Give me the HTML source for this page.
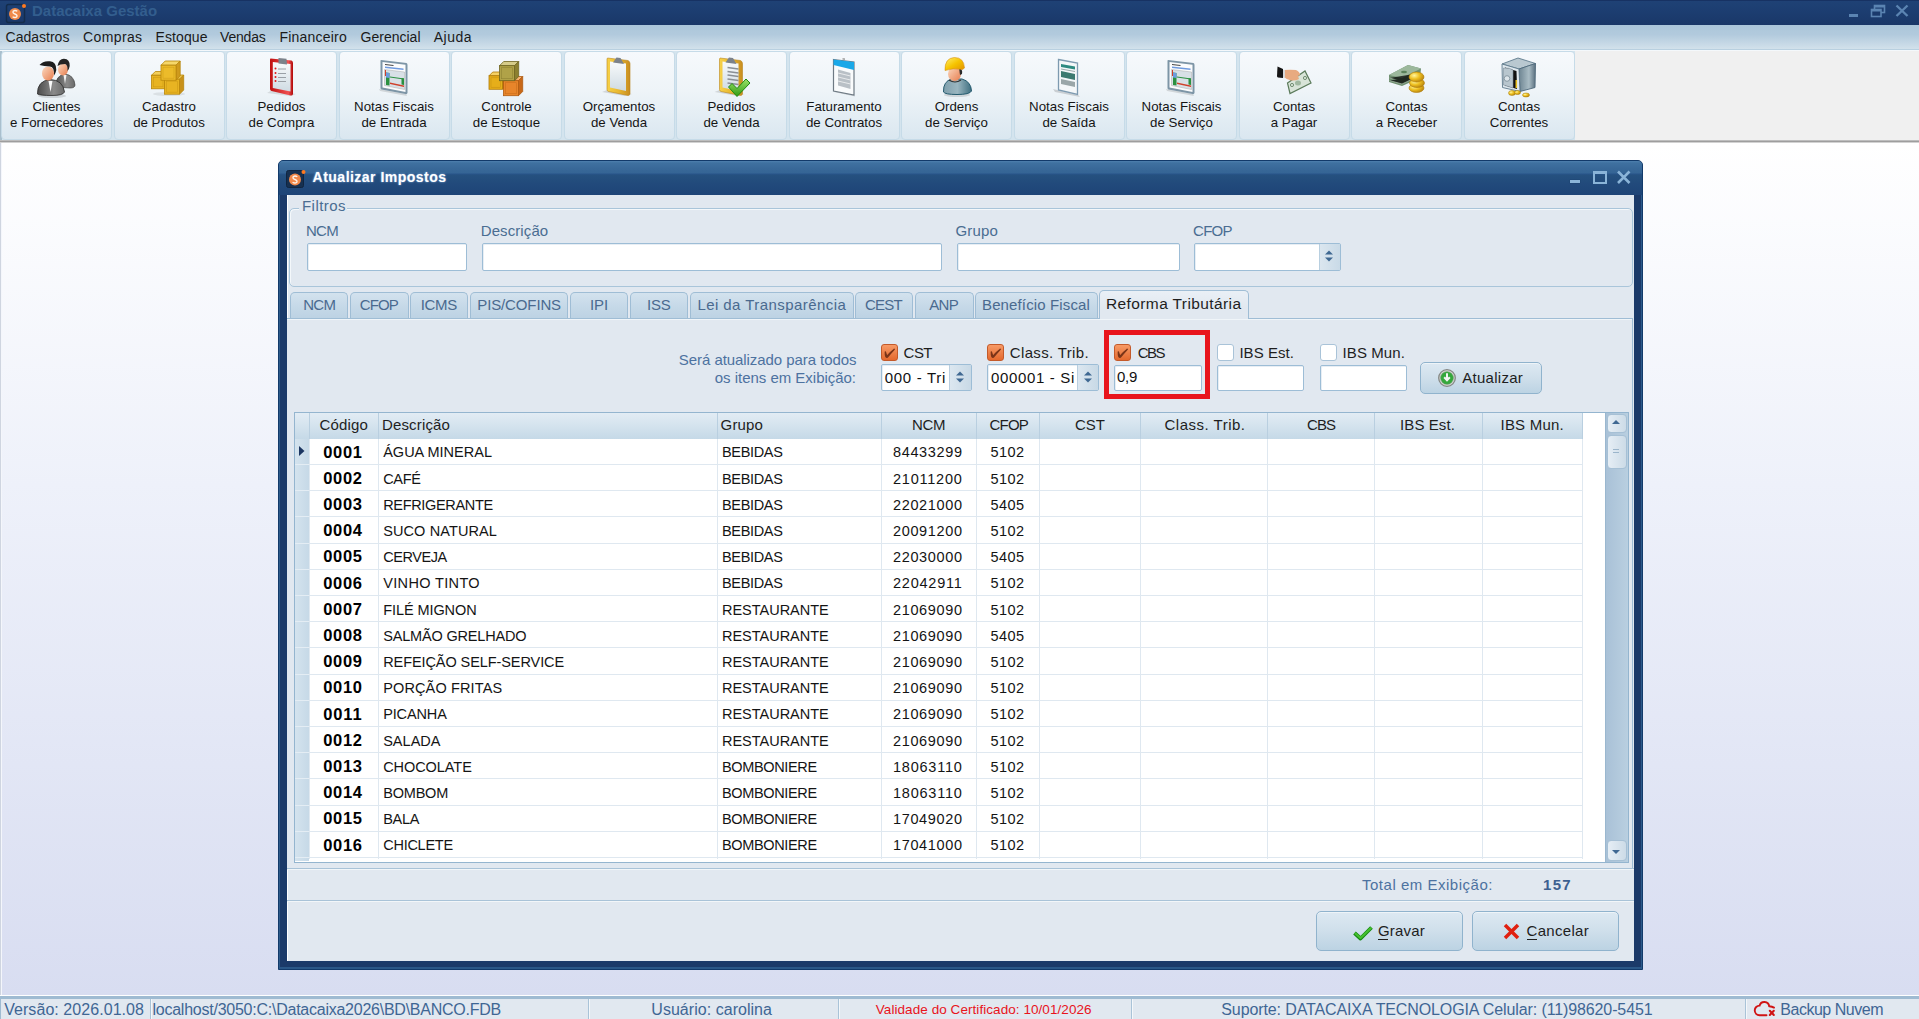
<!DOCTYPE html>
<html><head><meta charset="utf-8"><title>Datacaixa Gestão</title>
<style>
html,body{margin:0;padding:0;}
body{width:1919px;height:1019px;overflow:hidden;position:relative;font-family:'Liberation Sans', sans-serif;background:#fff;}
div,span{box-sizing:border-box;}
</style></head><body>
<div style="position:absolute;left:0px;top:0px;width:1919px;height:25px;background:linear-gradient(#1f4276 0%,#1c3d70 50%,#1a3768 100%);"></div><div style="position:absolute;left:0px;top:0px;width:1919px;height:1px;background:#173263;"></div><svg style="position:absolute;left:5px;top:2px" width="22" height="22" viewBox="0 0 22 22"><rect x="1.5" y="2.5" width="18" height="18" rx="2" fill="none" stroke="#142c4c" stroke-width="1.5"/><circle cx="10" cy="12" r="6" fill="#f08a4a"/><path d="M12.3 9.3 Q10 7.6 8.2 9.2 Q7.4 11 10 12 Q12.6 13 11.8 14.8 Q10 16.4 7.6 14.7" fill="none" stroke="#fff3e8" stroke-width="1.4"/><circle cx="19" cy="4" r="2" fill="#ff7a20"/></svg><div style="position:absolute;left:1849px;top:14px;width:9px;height:3px;background:#5b84b2;"></div><svg style="position:absolute;left:1870px;top:4px" width="16" height="14" viewBox="0 0 16 14"><rect x="4.5" y="1.5" width="10" height="7" fill="none" stroke="#5b84b2" stroke-width="1.6"/><rect x="1" y="5" width="10" height="7.5" fill="#1b3a6c"/><rect x="1.5" y="5.5" width="9.5" height="7" fill="none" stroke="#5b84b2" stroke-width="1.6"/><rect x="1.5" y="5.5" width="9.5" height="2" fill="#5b84b2"/><rect x="4.5" y="1.5" width="10" height="2" fill="#5b84b2"/></svg><svg style="position:absolute;left:1894px;top:4px" width="16" height="14" viewBox="0 0 16 14"><path d="M2.5 1.5 L13.5 12 M13.5 1.5 L2.5 12" stroke="#5b84b2" stroke-width="2.4"/></svg><div style="position:absolute;left:0px;top:25px;width:1919px;height:24px;background:linear-gradient(#abc6da 0%,#b2cadd 40%,#d2e1eb 100%);"></div><div style="position:absolute;left:0px;top:49px;width:1919px;height:1px;background:#b9d0e0;"></div><div style="position:absolute;left:0px;top:50px;width:1919px;height:1px;background:#f4f8fb;"></div><div style="position:absolute;left:0px;top:51px;width:1919px;height:89px;background:#f0f0f0;"></div><div style="position:absolute;left:0px;top:51px;width:1575px;height:89px;background:#d4e4ee;"></div><div style="position:absolute;left:0px;top:51px;width:2px;height:89px;background:#a9bfcd;"></div><div style="position:absolute;left:1.25px;top:51px;width:111px;height:89px;background:linear-gradient(#f6f9fc 0%,#eef4f8 45%,#dae7f0 100%);border:1px solid #c6dbe8;border-radius:4px;"></div><div style="position:absolute;left:113.75px;top:51px;width:111px;height:89px;background:linear-gradient(#f6f9fc 0%,#eef4f8 45%,#dae7f0 100%);border:1px solid #c6dbe8;border-radius:4px;"></div><div style="position:absolute;left:226.25px;top:51px;width:111px;height:89px;background:linear-gradient(#f6f9fc 0%,#eef4f8 45%,#dae7f0 100%);border:1px solid #c6dbe8;border-radius:4px;"></div><div style="position:absolute;left:338.75px;top:51px;width:111px;height:89px;background:linear-gradient(#f6f9fc 0%,#eef4f8 45%,#dae7f0 100%);border:1px solid #c6dbe8;border-radius:4px;"></div><div style="position:absolute;left:451.25px;top:51px;width:111px;height:89px;background:linear-gradient(#f6f9fc 0%,#eef4f8 45%,#dae7f0 100%);border:1px solid #c6dbe8;border-radius:4px;"></div><div style="position:absolute;left:563.75px;top:51px;width:111px;height:89px;background:linear-gradient(#f6f9fc 0%,#eef4f8 45%,#dae7f0 100%);border:1px solid #c6dbe8;border-radius:4px;"></div><div style="position:absolute;left:676.25px;top:51px;width:111px;height:89px;background:linear-gradient(#f6f9fc 0%,#eef4f8 45%,#dae7f0 100%);border:1px solid #c6dbe8;border-radius:4px;"></div><div style="position:absolute;left:788.75px;top:51px;width:111px;height:89px;background:linear-gradient(#f6f9fc 0%,#eef4f8 45%,#dae7f0 100%);border:1px solid #c6dbe8;border-radius:4px;"></div><div style="position:absolute;left:901.25px;top:51px;width:111px;height:89px;background:linear-gradient(#f6f9fc 0%,#eef4f8 45%,#dae7f0 100%);border:1px solid #c6dbe8;border-radius:4px;"></div><div style="position:absolute;left:1013.75px;top:51px;width:111px;height:89px;background:linear-gradient(#f6f9fc 0%,#eef4f8 45%,#dae7f0 100%);border:1px solid #c6dbe8;border-radius:4px;"></div><div style="position:absolute;left:1126.25px;top:51px;width:111px;height:89px;background:linear-gradient(#f6f9fc 0%,#eef4f8 45%,#dae7f0 100%);border:1px solid #c6dbe8;border-radius:4px;"></div><div style="position:absolute;left:1238.75px;top:51px;width:111px;height:89px;background:linear-gradient(#f6f9fc 0%,#eef4f8 45%,#dae7f0 100%);border:1px solid #c6dbe8;border-radius:4px;"></div><div style="position:absolute;left:1351.25px;top:51px;width:111px;height:89px;background:linear-gradient(#f6f9fc 0%,#eef4f8 45%,#dae7f0 100%);border:1px solid #c6dbe8;border-radius:4px;"></div><div style="position:absolute;left:1463.75px;top:51px;width:111px;height:89px;background:linear-gradient(#f6f9fc 0%,#eef4f8 45%,#dae7f0 100%);border:1px solid #c6dbe8;border-radius:4px;"></div><svg width="0" height="0" style="position:absolute"><defs><linearGradient id="gFace" x1="0" y1="0" x2="1" y2="1"><stop offset="0" stop-color="#fbd9c0"/><stop offset="1" stop-color="#e77d4e"/></linearGradient><linearGradient id="gSuit" x1="0" y1="0" x2="1" y2="0"><stop offset="0" stop-color="#4c4c4c"/><stop offset=".6" stop-color="#8a8a8a"/><stop offset="1" stop-color="#6a6a6a"/></linearGradient><linearGradient id="gGold" x1="0" y1="0" x2="1" y2="1"><stop offset="0" stop-color="#ffe27a"/><stop offset=".5" stop-color="#f0b820"/><stop offset="1" stop-color="#c88a10"/></linearGradient><linearGradient id="gRed" x1="0" y1="0" x2="1" y2="0"><stop offset="0" stop-color="#c01010"/><stop offset=".8" stop-color="#f05050"/><stop offset="1" stop-color="#b00808"/></linearGradient><linearGradient id="gPaper" x1="0" y1="0" x2="0" y2="1"><stop offset="0" stop-color="#f8fafb"/><stop offset="1" stop-color="#cfdbe3"/></linearGradient><linearGradient id="gYel" x1="0" y1="0" x2="1" y2="0"><stop offset="0" stop-color="#f7d24a"/><stop offset=".5" stop-color="#e8b830"/><stop offset="1" stop-color="#c88d20"/></linearGradient><linearGradient id="gHelm" x1="0" y1="0" x2="1" y2="1"><stop offset="0" stop-color="#fff070"/><stop offset=".5" stop-color="#f6c400"/><stop offset="1" stop-color="#e09000"/></linearGradient><linearGradient id="gTeal" x1="0" y1="0" x2="1" y2="0"><stop offset="0" stop-color="#7f9fac"/><stop offset=".5" stop-color="#9ab6c0"/><stop offset="1" stop-color="#3f6f80"/></linearGradient><linearGradient id="gSafe" x1="0" y1="0" x2="1" y2="0"><stop offset="0" stop-color="#6e8592"/><stop offset=".6" stop-color="#a9bcc4"/><stop offset="1" stop-color="#5a7080"/></linearGradient><linearGradient id="gGreen" x1="0" y1="0" x2="0" y2="1"><stop offset="0" stop-color="#9be36a"/><stop offset="1" stop-color="#2f9a10"/></linearGradient><radialGradient id="gCoin" cx=".35" cy=".35" r=".7"><stop offset="0" stop-color="#fff6a0"/><stop offset=".5" stop-color="#eec020"/><stop offset="1" stop-color="#b88410"/></radialGradient></defs></svg><svg style="position:absolute;left:30px;top:54px;overflow:visible" width="50" height="44" viewBox="0 0 50 44"><defs></defs><ellipse cx="22" cy="42" rx="14" ry="2" fill="#000" opacity=".12"/><path d="M25 33 Q26 21 35 20 Q44 21 45 31 Q45 34 40 34Z" fill="url(#gSuit)" stroke="#333" stroke-width=".6"/><path d="M33.5 21 L35 30 L36.5 21Z" fill="#f2f2f2"/><ellipse cx="33" cy="15.5" rx="5" ry="6" fill="url(#gFace)"/><path d="M27.5 12 Q29 4.5 34 4.7 Q40 5 39.7 12 Q39 16 37.5 17 Q38 11 35 10 Q30 10 27.5 12Z" fill="#242424"/><path d="M7.5 40 Q7 27 20 25.5 Q33 26 34.5 38 Q33 41.5 22 41.5 Q10 41.5 7.5 40Z" fill="url(#gSuit)" stroke="#2a2a2a" stroke-width=".8"/><path d="M18.5 27 L20.5 38 L22.5 27Z" fill="#fafafa"/><ellipse cx="18" cy="19.5" rx="6" ry="7" fill="url(#gFace)"/><path d="M9.5 11 Q13 6.5 20 7.3 Q26.5 8 26.3 16 Q25.5 20 24 21.5 Q24.5 13 20 12.5 Q14 12 9.5 11Z" fill="#1e1e1e"/></svg><svg style="position:absolute;left:145px;top:54px;overflow:visible" width="50" height="44" viewBox="0 0 50 44"><defs></defs><ellipse cx="24" cy="40" rx="16" ry="2" fill="#000" opacity=".08"/><path d="M6.5 21.28 L10.280000000000001 17.5 L23.78 17.5 L20.0 21.28Z" fill="#f3cf5a" stroke="#b8860b" stroke-width=".8"/><path d="M20.0 21.28 L23.78 17.5 L23.78 31.0 L20.0 34.78Z" fill="#c8911a" stroke="#b8860b" stroke-width=".8"/><rect x="6.5" y="21.28" width="13.5" height="13.5" fill="#e8b422" stroke="#b8860b" stroke-width=".8"/><rect x="8.5" y="23.28" width="9.5" height="9.5" fill="none" stroke="#b8860b" stroke-width=".6" opacity=".5"/><path d="M19.5 25.2 L23.7 21 L38.7 21 L34.5 25.2Z" fill="#f3cf5a" stroke="#b8860b" stroke-width=".8"/><path d="M34.5 25.2 L38.7 21 L38.7 36 L34.5 40.2Z" fill="#c8911a" stroke="#b8860b" stroke-width=".8"/><rect x="19.5" y="25.2" width="15" height="15" fill="#e8b422" stroke="#b8860b" stroke-width=".8"/><rect x="21.5" y="27.2" width="11" height="11" fill="none" stroke="#b8860b" stroke-width=".6" opacity=".5"/><path d="M16 11.2 L20.2 7 L35.2 7 L31 11.2Z" fill="#f6d76a" stroke="#b8860b" stroke-width=".8"/><path d="M31 11.2 L35.2 7 L35.2 22 L31 26.2Z" fill="#cf9a1e" stroke="#b8860b" stroke-width=".8"/><rect x="16" y="11.2" width="15" height="15" fill="#ecbb2a" stroke="#b8860b" stroke-width=".8"/><rect x="18" y="13.2" width="11" height="11" fill="none" stroke="#b8860b" stroke-width=".6" opacity=".5"/></svg><svg style="position:absolute;left:260px;top:54px;overflow:visible" width="50" height="44" viewBox="0 0 50 44"><defs></defs><path d="M7 39 L30 42 L36 40 L12 36Z" fill="#000" opacity=".1"/><path d="M10.5 4.5 L31.5 6.5 Q33 7 33 9 L33 40 Q32.5 42 30.5 41.5 L11.5 37 Q10 36.5 10 35 L10 6 Q10 4.5 10.5 4.5Z" fill="url(#gRed)"/><path d="M12.8 8 L30.5 10 L30.5 37.5 L12.8 34Z" fill="url(#gPaper)"/><path d="M18.5 4 L26.5 4.8 L27 10.5 L18.5 9.5Z" fill="#7c828a"/><g fill="#e01818"><circle cx="15.5" cy="14.5" r="1"/><circle cx="15.5" cy="19" r="1"/><circle cx="15.5" cy="23" r="1"/><circle cx="15.5" cy="27" r="1"/></g><g stroke="#9aa0a6" stroke-width="1"><path d="M18 15 H26"/><path d="M18 19.5 H26"/><path d="M18 23.5 H26"/><path d="M18 27.5 H26"/></g></svg><svg style="position:absolute;left:370px;top:54px;overflow:visible" width="50" height="44" viewBox="0 0 50 44"><defs></defs><path d="M9 35 L36 40 L37 42 L10 37Z" fill="#000" opacity=".12"/><path d="M11 6 L36.5 9 Q37.5 9.5 37.5 11 L37.5 39 Q37 40.5 35.5 40 L11.5 35.5 Q10.5 35 10.5 34 L10.5 6.5Z" fill="#7d95a6"/><path d="M12.5 8 L35.5 10.8 L35.5 38 L12.5 33.5Z" fill="#fbfcfd"/><path d="M15 10 L23.5 11 L23.5 12 L15 11Z" fill="#444"/><path d="M15 12.5 L33.5 14.5 L33.5 16 L15 14Z" fill="#6f9ade"/><path d="M14.5 15.5 L34.5 18 L34.5 35.5 L14.5 31.5Z" fill="#d8e0e6" stroke="#999" stroke-width=".4"/><path d="M16 18.5 L19.5 19 L19.5 31.5 L16 31Z" fill="#2a9040"/><path d="M16 18.5 L19.5 19 L19.5 24 L16 23.5Z" fill="#6c9be0"/><path d="M31.5 24 L34 24.5 L34 31 L31.5 30.5Z" fill="#2a9040"/><path d="M20 22.5 L34 24.5 L34 25.5 L20 23.5Z" fill="#2a9040"/><path d="M20 28.5 L34 31.5 L34 33 L20 30Z" fill="#d0402a"/><path d="M15 16 L16 16 L16 22 L15 22Z" fill="#d0402a"/></svg><svg style="position:absolute;left:480px;top:54px;overflow:visible" width="50" height="44" viewBox="0 0 50 44"><defs></defs><path d="M9 21.78 L12.780000000000001 18 L26.28 18 L22.5 21.78Z" fill="#f4d066" stroke="#b07a08" stroke-width=".8"/><path d="M22.5 21.78 L26.28 18 L26.28 31.5 L22.5 35.28Z" fill="#c89010" stroke="#b07a08" stroke-width=".8"/><rect x="9" y="21.78" width="13.5" height="13.5" fill="#e6ae1a" stroke="#b07a08" stroke-width=".8"/><rect x="11" y="23.78" width="9.5" height="9.5" fill="none" stroke="#b07a08" stroke-width=".6" opacity=".5"/><path d="M23.5 26.7 L27.7 22.5 L42.7 22.5 L38.5 26.7Z" fill="#f6b070" stroke="#b05a10" stroke-width=".8"/><path d="M38.5 26.7 L42.7 22.5 L42.7 37.5 L38.5 41.7Z" fill="#c86818" stroke="#b05a10" stroke-width=".8"/><rect x="23.5" y="26.7" width="15" height="15" fill="#e8852a" stroke="#b05a10" stroke-width=".8"/><rect x="25.5" y="28.7" width="11" height="11" fill="none" stroke="#b05a10" stroke-width=".6" opacity=".5"/><path d="M19.5 11.7 L23.7 7.5 L38.7 7.5 L34.5 11.7Z" fill="#d6cc8a" stroke="#6e6420" stroke-width=".8"/><path d="M34.5 11.7 L38.7 7.5 L38.7 22.5 L34.5 26.7Z" fill="#8c8030" stroke="#6e6420" stroke-width=".8"/><rect x="19.5" y="11.7" width="15" height="15" fill="#b0a248" stroke="#6e6420" stroke-width=".8"/><rect x="21.5" y="13.7" width="11" height="11" fill="none" stroke="#6e6420" stroke-width=".6" opacity=".5"/></svg><svg style="position:absolute;left:595px;top:54px;overflow:visible" width="50" height="44" viewBox="0 0 50 44"><defs></defs><path d="M7 38 L30 42 L37 40 L12 36Z" fill="#000" opacity=".12"/><path d="M12.5 4 L33 6.5 Q35 7.5 35 9.5 L35 40 Q34.5 41.5 33 41.5 L13.5 37.5 Q12 37 12 35.5 L12 5Z" fill="url(#gYel)" stroke="#b8841c" stroke-width=".6"/><path d="M15 7.5 L31 9.5 L31 37 L15 33.5Z" fill="url(#gPaper)"/><path d="M21.5 3.5 L25.5 4 L29 10 L18 8.5Z" fill="#7c828a"/></svg><svg style="position:absolute;left:705px;top:54px;overflow:visible" width="55" height="44" viewBox="0 0 55 44"><defs></defs><g transform="translate(2.5,0)"><path d="M7 38 L30 42 L37 40 L12 36Z" fill="#000" opacity=".12"/><path d="M12.5 4 L33 6.5 Q35 7.5 35 9.5 L35 40 Q34.5 41.5 33 41.5 L13.5 37.5 Q12 37 12 35.5 L12 5Z" fill="url(#gYel)" stroke="#b8841c" stroke-width=".6"/><path d="M15 7.5 L31 9.5 L31 37 L15 33.5Z" fill="url(#gPaper)"/><path d="M21.5 3.5 L25.5 4 L29 10 L18 8.5Z" fill="#7c828a"/><g stroke="#8a8f95" stroke-width="1.4"><path d="M20 13.5 L31 15"/><path d="M20 17.5 L31 19"/><path d="M20 21 L31 22.5"/><path d="M20 25 L31 26.5"/><path d="M20 29 L31 30.5"/></g></g><path d="M23.5 33 L27 29.5 L32 34.5 L41 25 L45 29 L32 42.5Z" fill="url(#gGreen)" stroke="#1f8a10" stroke-width="1"/></svg><svg style="position:absolute;left:820px;top:54px;overflow:visible" width="50" height="44" viewBox="0 0 50 44"><defs></defs><path d="M14 36 L34 41 L35 42.5 L14 38Z" fill="#000" opacity=".15"/><path d="M13.5 5.5 L34 8 L34 41 L13.5 37Z" fill="#f9fbfc" stroke="#6e7a84" stroke-width="1.2"/><path d="M13.5 5.5 L34 8 L34 16 L13.5 11Z" fill="#1aa8e8"/><path d="M22.5 4 L25 4.3 L25 6 L22.5 5.7Z" fill="#aaa"/><g fill="#b9c0c6"><path d="M18 15.5 L30.5 19 L30.5 35 L18 31.5Z"/></g><g stroke="#fafafa" stroke-width=".9" opacity=".8"><path d="M18 19 L30.5 22"/><path d="M18 23 L30.5 26"/><path d="M18 27 L30.5 30"/></g></svg><svg style="position:absolute;left:935px;top:54px;overflow:visible" width="50" height="44" viewBox="0 0 50 44"><defs></defs><ellipse cx="22" cy="41" rx="13" ry="2" fill="#000" opacity=".12"/><path d="M8.5 38 Q8 27 17 25 L27 25 Q36 27.5 36.5 37 Q35 40.5 22 40.5 Q10 40.5 8.5 38Z" fill="url(#gTeal)" stroke="#235a6e" stroke-width="1"/><path d="M14 26 Q20 30 26 26" fill="none" stroke="#333" stroke-width="1.2"/><ellipse cx="19.5" cy="20" rx="6.5" ry="7" fill="url(#gFace)"/><path d="M24 14 Q28 15 27 20 L25 21Z" fill="#2a2a2a"/><path d="M10 16.5 Q9.5 4 19.5 3.5 Q29 3.5 29.5 14 L27.5 15.5 Q18 13.5 10 16.5Z" fill="url(#gHelm)" stroke="#d89010" stroke-width=".6"/></svg><svg style="position:absolute;left:1045px;top:54px;overflow:visible" width="50" height="44" viewBox="0 0 50 44"><defs></defs><path d="M8 35 L33 41 L35 43 L10 38Z" fill="#000" opacity=".15"/><path d="M13.5 5.5 L32.5 9 L32.5 40.5 L13.5 36Z" fill="#f4f7f9" stroke="#7d9ab0" stroke-width="1.3"/><path d="M16 10 L30 12.5 L30 15.5 L16 13Z" fill="#2d8a80"/><path d="M16 14.5 L30 17 L30 18 L16 15.5Z" fill="#9aa"/><path d="M16 17 L30 20 L30 26 L16 23Z" fill="#3c7a70"/><path d="M16 25 L30 28 L30 33 L16 30Z" fill="#9aa6a8"/></svg><svg style="position:absolute;left:1157px;top:54px;overflow:visible" width="50" height="44" viewBox="0 0 50 44"><defs></defs><path d="M9 35 L36 40 L37 42 L10 37Z" fill="#000" opacity=".12"/><path d="M11 6 L36.5 9 Q37.5 9.5 37.5 11 L37.5 39 Q37 40.5 35.5 40 L11.5 35.5 Q10.5 35 10.5 34 L10.5 6.5Z" fill="#7d95a6"/><path d="M12.5 8 L35.5 10.8 L35.5 38 L12.5 33.5Z" fill="#fbfcfd"/><path d="M15 10 L23.5 11 L23.5 12 L15 11Z" fill="#444"/><path d="M15 12.5 L33.5 14.5 L33.5 16 L15 14Z" fill="#6f9ade"/><path d="M14.5 15.5 L34.5 18 L34.5 35.5 L14.5 31.5Z" fill="#d8e0e6" stroke="#999" stroke-width=".4"/><path d="M16 18.5 L19.5 19 L19.5 31.5 L16 31Z" fill="#2a9040"/><path d="M16 18.5 L19.5 19 L19.5 24 L16 23.5Z" fill="#6c9be0"/><path d="M31.5 24 L34 24.5 L34 31 L31.5 30.5Z" fill="#2a9040"/><path d="M20 22.5 L34 24.5 L34 25.5 L20 23.5Z" fill="#2a9040"/><path d="M20 28.5 L34 31.5 L34 33 L20 30Z" fill="#d0402a"/><path d="M15 16 L16 16 L16 22 L15 22Z" fill="#d0402a"/></svg><svg style="position:absolute;left:1270px;top:54px;overflow:visible" width="50" height="44" viewBox="0 0 50 44"><defs></defs><path d="M17.5 29 L35 17 L41 29 L20 39.5Z" fill="#d8e4d8" stroke="#5a7a5a" stroke-width="1.2"/><circle cx="22" cy="31" r="1.6" fill="none" stroke="#5a7a5a" stroke-width=".8"/><circle cx="35" cy="24" r="1.6" fill="none" stroke="#5a7a5a" stroke-width=".8"/><ellipse cx="28" cy="29" rx="3" ry="2.5" fill="#7a9a7a" opacity=".6"/><path d="M14 16 Q20 15.5 26 16 Q30 18 30 21 L28 22 L29 25 Q26 27 21 26.5 Q16 25 14 23Z" fill="#e8aa80"/><path d="M13 16 L15 16 L15 23.5 L13 23.5Z" fill="#d8d8d8"/><path d="M7.5 12.5 L13 15 L13 24 L8 23.5 Q7 23 7 22Z" fill="#151515"/></svg><svg style="position:absolute;left:1380px;top:54px;overflow:visible" width="50" height="44" viewBox="0 0 50 44"><defs></defs><path d="M9 21 L28 11 L41 14.5 L40 24 L22 32 L9 28Z" fill="#6f8f70"/><path d="M9 21 L28 11 L41 14.5 L22 24Z" fill="#9cb89c"/><g stroke="#c8d8c8" stroke-width=".7" opacity=".7"><path d="M9.5 24 L22 27.5 L40 19"/><path d="M9.5 26.5 L22 30 L40 21.5"/></g><ellipse cx="24" cy="18" rx="3" ry="1.2" fill="#3e6a3e" opacity=".7"/><g stroke="#b07c08" stroke-width=".6"><ellipse cx="36.5" cy="34" rx="7.5" ry="4.5" fill="url(#gCoin)"/><ellipse cx="37" cy="29" rx="7.5" ry="4.5" fill="url(#gCoin)"/><ellipse cx="36.5" cy="23" rx="7.5" ry="5" fill="url(#gCoin)"/></g></svg><svg style="position:absolute;left:1495px;top:54px;overflow:visible" width="50" height="46" viewBox="0 0 50 46"><defs></defs><path d="M7 10 L23 4 L40.5 9.5 L24 15Z" fill="#b9c8d0" stroke="#5f7a8c" stroke-width=".9"/><path d="M24 15 L40.5 9.5 L40 33.5 L25 37.5Z" fill="url(#gSafe)" stroke="#4f6a7c" stroke-width=".9"/><path d="M7 10 L24 15 L25 37.5 L7.5 33.5Z" fill="#dfe8ee" stroke="#5f7a8c" stroke-width=".9"/><path d="M10 13.5 L21.5 17 L22 35 L10 31.5Z" fill="#111"/><path d="M8.5 14 Q15 13.5 18 16 L18 34 L8.5 31Z" fill="#b8c6ce" stroke="#7a8c98" stroke-width=".6"/><circle cx="12" cy="24.5" r="2.8" fill="#dde5ea" stroke="#788a96" stroke-width=".8"/><rect x="20.5" y="26" width="1.6" height="8" fill="#e8c020"/><g stroke="#a88008" stroke-width=".5"><ellipse cx="17" cy="39" rx="3.5" ry="2.5" fill="url(#gCoin)"/><ellipse cx="22.5" cy="38.5" rx="3" ry="2" fill="url(#gCoin)"/><ellipse cx="31" cy="41" rx="3.5" ry="2" fill="url(#gCoin)"/></g></svg><div style="position:absolute;left:0px;top:140px;width:1919px;height:1px;background:#bdbdbd;"></div><div style="position:absolute;left:0px;top:141px;width:1919px;height:1px;background:#9e9e9e;"></div><div style="position:absolute;left:0px;top:142px;width:1919px;height:1px;background:#d2d2d2;"></div><div style="position:absolute;left:0px;top:143px;width:1919px;height:853px;background:linear-gradient(#ffffff 0%,#eef1fa 40%,#d8ddf1 100%);"></div><div style="position:absolute;left:0px;top:143px;width:1px;height:853px;background:#cfd5e0;"></div><div style="position:absolute;left:1px;top:143px;width:1px;height:853px;background:#f4f6fb;"></div><div style="position:absolute;left:278px;top:160px;width:1365px;height:810px;background:#1b3a69;border-radius:5px 5px 0 0;border:1px solid #123a6a;box-shadow:inset 1px 0 0 #2c5a8a,inset -1px 0 0 #2c5a8a,inset 0 -2px 0 #2a5787;"></div><div style="position:absolute;left:279px;top:161px;width:1363px;height:34px;background:linear-gradient(#4e80ae 0px,#3f71a0 2px,#386898 8px,#356595 12px,#28548a 13px,#25517f 14px,#21497b 24px,#1e4477 34px);border-radius:4px 4px 0 0;"></div><svg style="position:absolute;left:285px;top:168px" width="22" height="22" viewBox="0 0 22 22"><rect x="1.5" y="2.5" width="17" height="17" rx="2" fill="#163050" stroke="#102540" stroke-width="1"/><circle cx="10" cy="11.5" r="6" fill="#f0884a"/><path d="M12.3 8.8 Q10 7.1 8.2 8.7 Q7.4 10.5 10 11.5 Q12.6 12.5 11.8 14.3 Q10 15.9 7.6 14.2" fill="none" stroke="#fff3e8" stroke-width="1.4"/><circle cx="18.5" cy="4" r="2" fill="#ff7a20"/></svg><div style="position:absolute;left:1570px;top:180px;width:9.5px;height:3px;background:#8ab4d8;box-shadow:0 0 1px #0e2a50;"></div><div style="position:absolute;left:1593px;top:171px;width:14px;height:12.5px;border:2px solid #8ab4d8;border-top-width:3px;"></div><svg style="position:absolute;left:1616px;top:170px" width="16" height="15" viewBox="0 0 16 15"><path d="M2 1.5 L13.5 13 M13.5 1.5 L2 13" stroke="#8ab4d8" stroke-width="2.6"/></svg><div style="position:absolute;left:287px;top:195px;width:1347px;height:766px;background:#e1e8f0;box-shadow:inset 1px 0 0 #ffffff;"></div><div style="position:absolute;left:288.5px;top:208px;width:1344px;height:79px;border:1px solid #a9c5da;border-radius:5px;box-shadow:inset 1px 1px 0 #f4f8fb;"></div><div style="position:absolute;left:299px;top:199px;width:48px;height:14px;background:#e1e8f0;"></div><div style="position:absolute;left:307px;top:242.5px;width:160px;height:28px;background:#fff;border:1px solid #9dbdd6;border-radius:2px;box-shadow:inset 1px 1px 0 #e8eef4;"></div><div style="position:absolute;left:482px;top:242.5px;width:460px;height:28px;background:#fff;border:1px solid #9dbdd6;border-radius:2px;box-shadow:inset 1px 1px 0 #e8eef4;"></div><div style="position:absolute;left:956.5px;top:242.5px;width:223px;height:28px;background:#fff;border:1px solid #9dbdd6;border-radius:2px;box-shadow:inset 1px 1px 0 #e8eef4;"></div><div style="position:absolute;left:1194px;top:242.5px;width:147px;height:28px;background:#fff;border:1px solid #9dbdd6;border-radius:2px;box-shadow:inset 1px 1px 0 #e8eef4;"></div><div style="position:absolute;left:1318.5px;top:243.5px;width:21.5px;height:26px;background:linear-gradient(90deg,#dbe6ef,#c9dae7);border-left:1px solid #b8cfe0;"></div><svg style="position:absolute;left:1322px;top:247px" width="14" height="18" viewBox="0 0 14 18"><path d="M3 7.5 L7 3.5 L11 7.5Z M3 10.5 L7 14.5 L11 10.5Z" fill="#3f6892"/></svg><div style="position:absolute;left:289.6px;top:291.5px;width:58.799999999999955px;height:27px;background:linear-gradient(#d3e2ee 0%,#c6d9e8 50%,#bcd2e3 100%);border:1px solid #9fbdd5;border-bottom:none;border-radius:5px 5px 0 0;"></div><div style="position:absolute;left:350px;top:291.5px;width:58.80000000000001px;height:27px;background:linear-gradient(#d3e2ee 0%,#c6d9e8 50%,#bcd2e3 100%);border:1px solid #9fbdd5;border-bottom:none;border-radius:5px 5px 0 0;"></div><div style="position:absolute;left:410.2px;top:291.5px;width:58.19999999999999px;height:27px;background:linear-gradient(#d3e2ee 0%,#c6d9e8 50%,#bcd2e3 100%);border:1px solid #9fbdd5;border-bottom:none;border-radius:5px 5px 0 0;"></div><div style="position:absolute;left:469.5px;top:291.5px;width:98.79999999999995px;height:27px;background:linear-gradient(#d3e2ee 0%,#c6d9e8 50%,#bcd2e3 100%);border:1px solid #9fbdd5;border-bottom:none;border-radius:5px 5px 0 0;"></div><div style="position:absolute;left:569.5px;top:291.5px;width:58.799999999999955px;height:27px;background:linear-gradient(#d3e2ee 0%,#c6d9e8 50%,#bcd2e3 100%);border:1px solid #9fbdd5;border-bottom:none;border-radius:5px 5px 0 0;"></div><div style="position:absolute;left:629.5px;top:291.5px;width:58.799999999999955px;height:27px;background:linear-gradient(#d3e2ee 0%,#c6d9e8 50%,#bcd2e3 100%);border:1px solid #9fbdd5;border-bottom:none;border-radius:5px 5px 0 0;"></div><div style="position:absolute;left:689.5px;top:291.5px;width:164.29999999999995px;height:27px;background:linear-gradient(#d3e2ee 0%,#c6d9e8 50%,#bcd2e3 100%);border:1px solid #9fbdd5;border-bottom:none;border-radius:5px 5px 0 0;"></div><div style="position:absolute;left:855.2px;top:291.5px;width:58.19999999999993px;height:27px;background:linear-gradient(#d3e2ee 0%,#c6d9e8 50%,#bcd2e3 100%);border:1px solid #9fbdd5;border-bottom:none;border-radius:5px 5px 0 0;"></div><div style="position:absolute;left:914.8px;top:291.5px;width:58.80000000000007px;height:27px;background:linear-gradient(#d3e2ee 0%,#c6d9e8 50%,#bcd2e3 100%);border:1px solid #9fbdd5;border-bottom:none;border-radius:5px 5px 0 0;"></div><div style="position:absolute;left:974.7px;top:291.5px;width:123.0px;height:27px;background:linear-gradient(#d3e2ee 0%,#c6d9e8 50%,#bcd2e3 100%);border:1px solid #9fbdd5;border-bottom:none;border-radius:5px 5px 0 0;"></div><div style="position:absolute;left:287px;top:317.5px;width:1345.5px;height:551px;border:1px solid #9fbdd5;border-left:none;background:#e1e8f0;box-shadow:inset 0 1px 0 #f0f5f9;"></div><div style="position:absolute;left:1098.5px;top:289.6px;width:150.5px;height:29px;background:linear-gradient(#eaf0f6,#e1e8f0 60%);border:1px solid #9fbdd5;border-bottom:none;border-radius:5px 5px 0 0;"></div><div style="position:absolute;left:880.8px;top:344px;width:17px;height:17px;background:linear-gradient(#f79a66,#e4692e);border:1px solid #c45a2a;border-radius:3px;"></div><svg style="position:absolute;left:880.8px;top:344px" width="17" height="17" viewBox="0 0 17 17"><path d="M4.3 7.8 Q5 10 5.8 12.4 Q9 8.5 13.3 5.3 Q9.5 9.5 6.3 13.2 Q5.6 13.5 5 12.9 Q4.1 10.5 4.3 7.8Z" fill="#7a3418" stroke="#7a3418" stroke-width="1.3" stroke-linejoin="round"/></svg><div style="position:absolute;left:987px;top:344px;width:17px;height:17px;background:linear-gradient(#f79a66,#e4692e);border:1px solid #c45a2a;border-radius:3px;"></div><svg style="position:absolute;left:987px;top:344px" width="17" height="17" viewBox="0 0 17 17"><path d="M4.3 7.8 Q5 10 5.8 12.4 Q9 8.5 13.3 5.3 Q9.5 9.5 6.3 13.2 Q5.6 13.5 5 12.9 Q4.1 10.5 4.3 7.8Z" fill="#7a3418" stroke="#7a3418" stroke-width="1.3" stroke-linejoin="round"/></svg><div style="position:absolute;left:1114.3px;top:344px;width:17px;height:17px;background:linear-gradient(#f79a66,#e4692e);border:1px solid #c45a2a;border-radius:3px;"></div><svg style="position:absolute;left:1114.3px;top:344px" width="17" height="17" viewBox="0 0 17 17"><path d="M4.3 7.8 Q5 10 5.8 12.4 Q9 8.5 13.3 5.3 Q9.5 9.5 6.3 13.2 Q5.6 13.5 5 12.9 Q4.1 10.5 4.3 7.8Z" fill="#7a3418" stroke="#7a3418" stroke-width="1.3" stroke-linejoin="round"/></svg><div style="position:absolute;left:1217.3px;top:344px;width:17px;height:17px;background:#fff;border:1px solid #a9c3d8;border-radius:3px;"></div><div style="position:absolute;left:1319.7px;top:344px;width:17px;height:17px;background:#fff;border:1px solid #a9c3d8;border-radius:3px;"></div><div style="position:absolute;left:881px;top:364px;width:90.5px;height:27px;background:#fff;border:1px solid #9dbdd6;border-radius:2px;box-shadow:inset 1px 1px 0 #e8eef4;"></div><div style="position:absolute;left:949px;top:365px;width:21.5px;height:25px;background:linear-gradient(90deg,#dce7f0,#c8d9e6);border-left:1px solid #b9cfe0;"></div><svg style="position:absolute;left:953px;top:368px" width="14" height="18" viewBox="0 0 14 18"><path d="M3 7.5 L7 3.5 L11 7.5Z M3 10.5 L7 14.5 L11 10.5Z" fill="#3f6892"/></svg><div style="position:absolute;left:987.4px;top:364px;width:111.30000000000007px;height:27px;background:#fff;border:1px solid #9dbdd6;border-radius:2px;box-shadow:inset 1px 1px 0 #e8eef4;"></div><div style="position:absolute;left:1076.9px;top:365px;width:20.799999999999955px;height:25px;background:linear-gradient(90deg,#dce7f0,#c8d9e6);border-left:1px solid #b9cfe0;"></div><svg style="position:absolute;left:1080.9px;top:368px" width="14" height="18" viewBox="0 0 14 18"><path d="M3 7.5 L7 3.5 L11 7.5Z M3 10.5 L7 14.5 L11 10.5Z" fill="#3f6892"/></svg><div style="position:absolute;left:1084px;top:366px;width:18px;height:22px;"></div><div style="position:absolute;left:1114.3px;top:364.5px;width:87.5px;height:26.5px;background:#fff;border:1px solid #9dbdd6;border-radius:2px;box-shadow:inset 1px 1px 0 #e8eef4;"></div><div style="position:absolute;left:1217.3px;top:364.5px;width:87px;height:26.5px;background:#fff;border:1px solid #9dbdd6;border-radius:2px;box-shadow:inset 1px 1px 0 #e8eef4;"></div><div style="position:absolute;left:1319.7px;top:364.5px;width:87px;height:26.5px;background:#fff;border:1px solid #9dbdd6;border-radius:2px;box-shadow:inset 1px 1px 0 #e8eef4;"></div><div style="position:absolute;left:1104px;top:330px;width:106px;height:69px;border:5px solid #e8141c;"></div><div style="position:absolute;left:1419.5px;top:361.5px;width:122px;height:32px;background:linear-gradient(#dde9f2 0%,#cfdfeb 50%,#bcd3e3 100%);border:1px solid #90b3cd;border-radius:5px;box-shadow:inset 0 1px 0 #eef4f8;"></div><svg style="position:absolute;left:1437px;top:368px" width="20" height="20" viewBox="0 0 20 20"><circle cx="10" cy="10" r="8.3" fill="#d4d6d4" stroke="#858885" stroke-width="1.3"/><circle cx="10" cy="10" r="6.3" fill="#34a83c" stroke="#5a9a5a" stroke-width=".6"/><path d="M10 5.3 V11.5 M7.2 9.3 L10 12.3 L12.8 9.3" fill="none" stroke="#f4f4f4" stroke-width="2"/></svg><div style="position:absolute;left:293.5px;top:411.5px;width:1335.5px;height:451.5px;background:#fff;border:1px solid #94b5cf;"></div><div style="position:absolute;left:294.5px;top:412.5px;width:1288.0px;height:26.5px;background:linear-gradient(#e2ecf4 0%,#d4e3ee 50%,#c5d9e7 100%);"></div><div style="position:absolute;left:294.5px;top:439px;width:14.5px;height:422px;background:linear-gradient(90deg,#d4e3ee,#c6d9e7);"></div><div style="position:absolute;left:309px;top:463.9px;width:1273.5px;height:1px;background:#dfe8f0;"></div><div style="position:absolute;left:294.5px;top:463.9px;width:14.5px;height:1px;background:#e4edf4;"></div><div style="position:absolute;left:309px;top:490.09999999999997px;width:1273.5px;height:1px;background:#dfe8f0;"></div><div style="position:absolute;left:294.5px;top:490.09999999999997px;width:14.5px;height:1px;background:#e4edf4;"></div><div style="position:absolute;left:309px;top:516.3px;width:1273.5px;height:1px;background:#dfe8f0;"></div><div style="position:absolute;left:294.5px;top:516.3px;width:14.5px;height:1px;background:#e4edf4;"></div><div style="position:absolute;left:309px;top:542.5px;width:1273.5px;height:1px;background:#dfe8f0;"></div><div style="position:absolute;left:294.5px;top:542.5px;width:14.5px;height:1px;background:#e4edf4;"></div><div style="position:absolute;left:309px;top:568.7px;width:1273.5px;height:1px;background:#dfe8f0;"></div><div style="position:absolute;left:294.5px;top:568.7px;width:14.5px;height:1px;background:#e4edf4;"></div><div style="position:absolute;left:309px;top:594.9px;width:1273.5px;height:1px;background:#dfe8f0;"></div><div style="position:absolute;left:294.5px;top:594.9px;width:14.5px;height:1px;background:#e4edf4;"></div><div style="position:absolute;left:309px;top:621.1px;width:1273.5px;height:1px;background:#dfe8f0;"></div><div style="position:absolute;left:294.5px;top:621.1px;width:14.5px;height:1px;background:#e4edf4;"></div><div style="position:absolute;left:309px;top:647.3px;width:1273.5px;height:1px;background:#dfe8f0;"></div><div style="position:absolute;left:294.5px;top:647.3px;width:14.5px;height:1px;background:#e4edf4;"></div><div style="position:absolute;left:309px;top:673.5px;width:1273.5px;height:1px;background:#dfe8f0;"></div><div style="position:absolute;left:294.5px;top:673.5px;width:14.5px;height:1px;background:#e4edf4;"></div><div style="position:absolute;left:309px;top:699.7px;width:1273.5px;height:1px;background:#dfe8f0;"></div><div style="position:absolute;left:294.5px;top:699.7px;width:14.5px;height:1px;background:#e4edf4;"></div><div style="position:absolute;left:309px;top:725.9px;width:1273.5px;height:1px;background:#dfe8f0;"></div><div style="position:absolute;left:294.5px;top:725.9px;width:14.5px;height:1px;background:#e4edf4;"></div><div style="position:absolute;left:309px;top:752.0999999999999px;width:1273.5px;height:1px;background:#dfe8f0;"></div><div style="position:absolute;left:294.5px;top:752.0999999999999px;width:14.5px;height:1px;background:#e4edf4;"></div><div style="position:absolute;left:309px;top:778.3px;width:1273.5px;height:1px;background:#dfe8f0;"></div><div style="position:absolute;left:294.5px;top:778.3px;width:14.5px;height:1px;background:#e4edf4;"></div><div style="position:absolute;left:309px;top:804.5px;width:1273.5px;height:1px;background:#dfe8f0;"></div><div style="position:absolute;left:294.5px;top:804.5px;width:14.5px;height:1px;background:#e4edf4;"></div><div style="position:absolute;left:309px;top:830.7px;width:1273.5px;height:1px;background:#dfe8f0;"></div><div style="position:absolute;left:294.5px;top:830.7px;width:14.5px;height:1px;background:#e4edf4;"></div><div style="position:absolute;left:309px;top:856.9px;width:1273.5px;height:1px;background:#dfe8f0;"></div><div style="position:absolute;left:294.5px;top:856.9px;width:14.5px;height:1px;background:#e4edf4;"></div><div style="position:absolute;left:308.5px;top:412.5px;width:1px;height:26.5px;background:#b9cfe0;"></div><div style="position:absolute;left:308.5px;top:439px;width:1px;height:419.5px;background:#dfe8f0;"></div><div style="position:absolute;left:377.75px;top:412.5px;width:1px;height:26.5px;background:#b9cfe0;"></div><div style="position:absolute;left:377.75px;top:439px;width:1px;height:419.5px;background:#dfe8f0;"></div><div style="position:absolute;left:716.75px;top:412.5px;width:1px;height:26.5px;background:#b9cfe0;"></div><div style="position:absolute;left:716.75px;top:439px;width:1px;height:419.5px;background:#dfe8f0;"></div><div style="position:absolute;left:880.5px;top:412.5px;width:1px;height:26.5px;background:#b9cfe0;"></div><div style="position:absolute;left:880.5px;top:439px;width:1px;height:419.5px;background:#dfe8f0;"></div><div style="position:absolute;left:975.5px;top:412.5px;width:1px;height:26.5px;background:#b9cfe0;"></div><div style="position:absolute;left:975.5px;top:439px;width:1px;height:419.5px;background:#dfe8f0;"></div><div style="position:absolute;left:1038.75px;top:412.5px;width:1px;height:26.5px;background:#b9cfe0;"></div><div style="position:absolute;left:1038.75px;top:439px;width:1px;height:419.5px;background:#dfe8f0;"></div><div style="position:absolute;left:1140.25px;top:412.5px;width:1px;height:26.5px;background:#b9cfe0;"></div><div style="position:absolute;left:1140.25px;top:439px;width:1px;height:419.5px;background:#dfe8f0;"></div><div style="position:absolute;left:1267.0px;top:412.5px;width:1px;height:26.5px;background:#b9cfe0;"></div><div style="position:absolute;left:1267.0px;top:439px;width:1px;height:419.5px;background:#dfe8f0;"></div><div style="position:absolute;left:1374.0px;top:412.5px;width:1px;height:26.5px;background:#b9cfe0;"></div><div style="position:absolute;left:1374.0px;top:439px;width:1px;height:419.5px;background:#dfe8f0;"></div><div style="position:absolute;left:1481.5px;top:412.5px;width:1px;height:26.5px;background:#b9cfe0;"></div><div style="position:absolute;left:1481.5px;top:439px;width:1px;height:419.5px;background:#dfe8f0;"></div><div style="position:absolute;left:1582.0px;top:412.5px;width:1px;height:26.5px;background:#b9cfe0;"></div><div style="position:absolute;left:1582.0px;top:439px;width:1px;height:419.5px;background:#dfe8f0;"></div><svg style="position:absolute;left:298px;top:445px" width="8" height="12" viewBox="0 0 8 12"><path d="M1 1 L6.5 6 L1 11Z" fill="#1b3561"/></svg><div style="position:absolute;left:1605px;top:412.5px;width:23px;height:449.5px;background:linear-gradient(90deg,#a9c1d7,#b9cfe0);border-left:1px solid #9ab7cf;"></div><div style="position:absolute;left:1606.5px;top:414px;width:20px;height:19px;background:linear-gradient(90deg,#e6eef5,#ccdbe7);border:1px solid #a6c0d5;border-radius:4px;"></div><svg style="position:absolute;left:1610px;top:418px" width="12" height="8" viewBox="0 0 12 8"><path d="M2 6 L6 2 L10 6Z" fill="#3f6892"/></svg><div style="position:absolute;left:1606.5px;top:435px;width:20px;height:34px;background:linear-gradient(90deg,#e6eef5,#ccdbe7);border:1px solid #a6c0d5;border-radius:4px;"></div><div style="position:absolute;left:1613px;top:449px;width:6px;height:1px;background:#9bb5cb;"></div><div style="position:absolute;left:1613px;top:452px;width:6px;height:1px;background:#9bb5cb;"></div><div style="position:absolute;left:1606.5px;top:840px;width:20px;height:21px;background:linear-gradient(90deg,#e6eef5,#ccdbe7);border:1px solid #a6c0d5;border-radius:4px;"></div><svg style="position:absolute;left:1610px;top:848px" width="12" height="8" viewBox="0 0 12 8"><path d="M2 2 L6 6 L10 2Z" fill="#3f6892"/></svg><div style="position:absolute;left:287px;top:868px;width:1347px;height:1px;background:#a9c3d8;"></div><div style="position:absolute;left:287px;top:869px;width:1347px;height:1px;background:#f2f6f9;"></div><div style="position:absolute;left:287px;top:899.5px;width:1347px;height:1px;background:#a9c3d8;"></div><div style="position:absolute;left:287px;top:900.5px;width:1347px;height:1px;background:#f2f6f9;"></div><div style="position:absolute;left:1315.5px;top:910.5px;width:147px;height:40px;background:linear-gradient(#dde9f2 0%,#cfdfeb 50%,#bcd3e3 100%);border:1px solid #90b3cd;border-radius:5px;box-shadow:inset 0 1px 0 #eef4f8;"></div><div style="position:absolute;left:1472px;top:910.5px;width:147px;height:40px;background:linear-gradient(#dde9f2 0%,#cfdfeb 50%,#bcd3e3 100%);border:1px solid #90b3cd;border-radius:5px;box-shadow:inset 0 1px 0 #eef4f8;"></div><svg style="position:absolute;left:1345px;top:918px" width="35" height="28" viewBox="0 0 35 28"><path d="M9.5 15 L15.5 20.5 L26.5 9.5" fill="none" stroke="#148a10" stroke-width="3.8" stroke-linejoin="round"/><path d="M9.8 15 L15.5 20 L26.2 9.8" fill="none" stroke="#46c030" stroke-width="2.2" stroke-linejoin="round"/></svg><div style="position:absolute;left:1378px;top:939px;width:10px;height:1.2px;background:#1e1e1e;"></div><svg style="position:absolute;left:1503px;top:923px" width="17" height="17" viewBox="0 0 17 17"><path d="M2 2 L15 15 M15 2 L2 15" stroke="#e02010" stroke-width="3.5"/></svg><div style="position:absolute;left:1526.5px;top:939px;width:10px;height:1.2px;background:#1e1e1e;"></div><div style="position:absolute;left:0px;top:995px;width:1919px;height:1px;background:#ffffff;"></div><div style="position:absolute;left:0px;top:996px;width:1919px;height:3px;background:#9fbbd2;"></div><div style="position:absolute;left:0px;top:999px;width:1919px;height:20px;background:#e1e8f0;"></div><div style="position:absolute;left:0px;top:996px;width:1px;height:23px;background:#9fbbd2;"></div><div style="position:absolute;left:150px;top:999px;width:1px;height:20px;background:#a9c3d8;"></div><div style="position:absolute;left:151px;top:999px;width:1px;height:20px;background:#f4f7fa;"></div><div style="position:absolute;left:587.5px;top:999px;width:1px;height:20px;background:#a9c3d8;"></div><div style="position:absolute;left:588.5px;top:999px;width:1px;height:20px;background:#f4f7fa;"></div><div style="position:absolute;left:837.7px;top:999px;width:1px;height:20px;background:#a9c3d8;"></div><div style="position:absolute;left:838.7px;top:999px;width:1px;height:20px;background:#f4f7fa;"></div><div style="position:absolute;left:1130.7px;top:999px;width:1px;height:20px;background:#a9c3d8;"></div><div style="position:absolute;left:1131.7px;top:999px;width:1px;height:20px;background:#f4f7fa;"></div><div style="position:absolute;left:1745.4px;top:999px;width:1px;height:20px;background:#a9c3d8;"></div><div style="position:absolute;left:1746.4px;top:999px;width:1px;height:20px;background:#f4f7fa;"></div><svg style="position:absolute;left:1748px;top:998px" width="30" height="21" viewBox="0 0 30 21"><path d="M18.5 17.2 H11.5 A4.8 4.8 0 0 1 11.6 7.6 A4.9 4.9 0 0 1 21.2 8.2 Q24.2 8.4 26 9.6" fill="none" stroke="#d01414" stroke-width="1.9" stroke-linecap="round"/><path d="M21.8 12.8 L25.8 17 M25.8 12.8 L21.8 17" stroke="#d01414" stroke-width="2.1" stroke-linecap="round"/></svg>
<span style="position:absolute;left:32.00px;top:3.42px;font-size:15px;line-height:16.75px;color:#335e8e;white-space:pre;font-weight:700;">Datacaixa Gestão</span><span style="position:absolute;left:5.60px;top:29.83px;font-size:14px;line-height:15.64px;color:#1a1a1a;white-space:pre;">Cadastros</span><span style="position:absolute;left:83.10px;top:29.83px;font-size:14px;line-height:15.64px;color:#1a1a1a;white-space:pre;letter-spacing:0.372px;">Compras</span><span style="position:absolute;left:155.60px;top:29.83px;font-size:14px;line-height:15.64px;color:#1a1a1a;white-space:pre;letter-spacing:0.075px;">Estoque</span><span style="position:absolute;left:220.00px;top:29.83px;font-size:14px;line-height:15.64px;color:#1a1a1a;white-space:pre;letter-spacing:-0.186px;">Vendas</span><span style="position:absolute;left:279.40px;top:29.83px;font-size:14px;line-height:15.64px;color:#1a1a1a;white-space:pre;letter-spacing:0.212px;">Financeiro</span><span style="position:absolute;left:360.60px;top:29.83px;font-size:14px;line-height:15.64px;color:#1a1a1a;white-space:pre;">Gerencial</span><span style="position:absolute;left:433.75px;top:29.83px;font-size:14px;line-height:15.64px;color:#1a1a1a;white-space:pre;letter-spacing:0.467px;">Ajuda</span><span style="position:absolute;left:32.48px;top:99.96px;font-size:13.3px;line-height:14.86px;color:#151515;white-space:pre;">Clientes</span><span style="position:absolute;left:9.93px;top:115.96px;font-size:13.3px;line-height:14.86px;color:#151515;white-space:pre;">e Fornecedores</span><span style="position:absolute;left:142.02px;top:99.96px;font-size:13.3px;line-height:14.86px;color:#151515;white-space:pre;">Cadastro</span><span style="position:absolute;left:133.14px;top:115.96px;font-size:13.3px;line-height:14.86px;color:#151515;white-space:pre;">de Produtos</span><span style="position:absolute;left:257.47px;top:99.96px;font-size:13.3px;line-height:14.86px;color:#151515;white-space:pre;">Pedidos</span><span style="position:absolute;left:248.61px;top:115.96px;font-size:13.3px;line-height:14.86px;color:#151515;white-space:pre;">de Compra</span><span style="position:absolute;left:354.09px;top:99.96px;font-size:13.3px;line-height:14.86px;color:#151515;white-space:pre;">Notas Fiscais</span><span style="position:absolute;left:361.47px;top:115.96px;font-size:13.3px;line-height:14.86px;color:#151515;white-space:pre;">de Entrada</span><span style="position:absolute;left:481.37px;top:99.96px;font-size:13.3px;line-height:14.86px;color:#151515;white-space:pre;">Controle</span><span style="position:absolute;left:472.86px;top:115.96px;font-size:13.3px;line-height:14.86px;color:#151515;white-space:pre;">de Estoque</span><span style="position:absolute;left:582.79px;top:99.96px;font-size:13.3px;line-height:14.86px;color:#151515;white-space:pre;">Orçamentos</span><span style="position:absolute;left:590.90px;top:115.96px;font-size:13.3px;line-height:14.86px;color:#151515;white-space:pre;">de Venda</span><span style="position:absolute;left:707.47px;top:99.96px;font-size:13.3px;line-height:14.86px;color:#151515;white-space:pre;">Pedidos</span><span style="position:absolute;left:703.40px;top:115.96px;font-size:13.3px;line-height:14.86px;color:#151515;white-space:pre;">de Venda</span><span style="position:absolute;left:806.30px;top:99.96px;font-size:13.3px;line-height:14.86px;color:#151515;white-space:pre;">Faturamento</span><span style="position:absolute;left:805.93px;top:115.96px;font-size:13.3px;line-height:14.86px;color:#151515;white-space:pre;">de Contratos</span><span style="position:absolute;left:934.70px;top:99.96px;font-size:13.3px;line-height:14.86px;color:#151515;white-space:pre;">Ordens</span><span style="position:absolute;left:925.09px;top:115.96px;font-size:13.3px;line-height:14.86px;color:#151515;white-space:pre;">de Serviço</span><span style="position:absolute;left:1029.09px;top:99.96px;font-size:13.3px;line-height:14.86px;color:#151515;white-space:pre;">Notas Fiscais</span><span style="position:absolute;left:1042.38px;top:115.96px;font-size:13.3px;line-height:14.86px;color:#151515;white-space:pre;">de Saída</span><span style="position:absolute;left:1141.59px;top:99.96px;font-size:13.3px;line-height:14.86px;color:#151515;white-space:pre;">Notas Fiscais</span><span style="position:absolute;left:1150.09px;top:115.96px;font-size:13.3px;line-height:14.86px;color:#151515;white-space:pre;">de Serviço</span><span style="position:absolute;left:1272.93px;top:99.96px;font-size:13.3px;line-height:14.86px;color:#151515;white-space:pre;">Contas</span><span style="position:absolute;left:1270.71px;top:115.96px;font-size:13.3px;line-height:14.86px;color:#151515;white-space:pre;">a Pagar</span><span style="position:absolute;left:1385.43px;top:99.96px;font-size:13.3px;line-height:14.86px;color:#151515;white-space:pre;">Contas</span><span style="position:absolute;left:1375.82px;top:115.96px;font-size:13.3px;line-height:14.86px;color:#151515;white-space:pre;">a Receber</span><span style="position:absolute;left:1497.93px;top:99.96px;font-size:13.3px;line-height:14.86px;color:#151515;white-space:pre;">Contas</span><span style="position:absolute;left:1489.80px;top:115.96px;font-size:13.3px;line-height:14.86px;color:#151515;white-space:pre;">Correntes</span><span style="position:absolute;left:312.60px;top:169.63px;font-size:14px;line-height:15.64px;color:#ffffff;white-space:pre;font-weight:700;letter-spacing:0.481px;text-shadow:0 0 2px #9cc3ee;">Atualizar Impostos</span><span style="position:absolute;left:302.00px;top:197.62px;font-size:15px;line-height:16.75px;color:#4a6d92;white-space:pre;letter-spacing:0.451px;">Filtros</span><span style="position:absolute;left:306.00px;top:222.62px;font-size:15px;line-height:16.75px;color:#4a6d92;white-space:pre;letter-spacing:-0.724px;">NCM</span><span style="position:absolute;left:480.75px;top:222.62px;font-size:15px;line-height:16.75px;color:#4a6d92;white-space:pre;letter-spacing:0.090px;">Descrição</span><span style="position:absolute;left:955.40px;top:222.62px;font-size:15px;line-height:16.75px;color:#4a6d92;white-space:pre;letter-spacing:0.179px;">Grupo</span><span style="position:absolute;left:1193.00px;top:222.62px;font-size:15px;line-height:16.75px;color:#4a6d92;white-space:pre;letter-spacing:-0.693px;">CFOP</span><span style="position:absolute;left:303.20px;top:296.62px;font-size:15px;line-height:16.75px;color:#4a6a8f;white-space:pre;letter-spacing:-0.724px;">NCM</span><span style="position:absolute;left:359.80px;top:296.62px;font-size:15px;line-height:16.75px;color:#4a6a8f;white-space:pre;letter-spacing:-0.918px;">CFOP</span><span style="position:absolute;left:420.70px;top:296.62px;font-size:15px;line-height:16.75px;color:#4a6a8f;white-space:pre;letter-spacing:-0.300px;">ICMS</span><span style="position:absolute;left:477.30px;top:296.62px;font-size:15px;line-height:16.75px;color:#4a6a8f;white-space:pre;letter-spacing:-0.132px;">PIS/COFINS</span><span style="position:absolute;left:590.00px;top:296.62px;font-size:15px;line-height:16.75px;color:#4a6a8f;white-space:pre;letter-spacing:-0.115px;">IPI</span><span style="position:absolute;left:647.00px;top:296.62px;font-size:15px;line-height:16.75px;color:#4a6a8f;white-space:pre;letter-spacing:-0.162px;">ISS</span><span style="position:absolute;left:697.40px;top:296.62px;font-size:15px;line-height:16.75px;color:#4a6a8f;white-space:pre;letter-spacing:0.440px;">Lei da Transparência</span><span style="position:absolute;left:865.00px;top:296.62px;font-size:15px;line-height:16.75px;color:#4a6a8f;white-space:pre;letter-spacing:-0.779px;">CEST</span><span style="position:absolute;left:929.20px;top:296.62px;font-size:15px;line-height:16.75px;color:#4a6a8f;white-space:pre;letter-spacing:-0.681px;">ANP</span><span style="position:absolute;left:982.00px;top:296.62px;font-size:15px;line-height:16.75px;color:#4a6a8f;white-space:pre;letter-spacing:0.132px;">Benefício Fiscal</span><span style="position:absolute;left:1106.00px;top:295.17px;font-size:15.5px;line-height:17.31px;color:#1e1e1e;white-space:pre;letter-spacing:0.391px;">Reforma Tributária</span><span style="position:absolute;left:678.85px;top:352.23px;font-size:15px;line-height:16.75px;color:#4d72a0;white-space:pre;letter-spacing:-0.063px;">Será atualizado para todos</span><span style="position:absolute;left:714.80px;top:369.93px;font-size:15px;line-height:16.75px;color:#4d72a0;white-space:pre;letter-spacing:-0.025px;">os itens em Exibição:</span><span style="position:absolute;left:903.60px;top:344.93px;font-size:15px;line-height:16.75px;color:#1e1e1e;white-space:pre;letter-spacing:-0.533px;">CST</span><span style="position:absolute;left:1009.80px;top:344.93px;font-size:15px;line-height:16.75px;color:#1e1e1e;white-space:pre;letter-spacing:0.349px;">Class. Trib.</span><span style="position:absolute;left:1137.70px;top:344.93px;font-size:15px;line-height:16.75px;color:#1e1e1e;white-space:pre;letter-spacing:-1.515px;">CBS</span><span style="position:absolute;left:1239.40px;top:344.93px;font-size:15px;line-height:16.75px;color:#1e1e1e;white-space:pre;letter-spacing:0.052px;">IBS Est.</span><span style="position:absolute;left:1342.60px;top:344.93px;font-size:15px;line-height:16.75px;color:#1e1e1e;white-space:pre;letter-spacing:0.087px;">IBS Mun.</span><span style="position:absolute;left:884.80px;top:369.82px;font-size:15px;line-height:16.75px;color:#111;white-space:pre;letter-spacing:0.685px;">000 - Tri</span><span style="position:absolute;left:991.00px;top:369.82px;font-size:15px;line-height:16.75px;color:#111;white-space:pre;letter-spacing:0.661px;">000001 - Si</span><span style="position:absolute;left:1117.00px;top:368.93px;font-size:15px;line-height:16.75px;color:#111;white-space:pre;letter-spacing:-0.286px;">0,9</span><span style="position:absolute;left:1462.30px;top:370.23px;font-size:15px;line-height:16.75px;color:#1e1e1e;white-space:pre;letter-spacing:0.260px;">Atualizar</span><span style="position:absolute;left:319.50px;top:416.93px;font-size:15px;line-height:16.75px;color:#1e1e1e;white-space:pre;letter-spacing:0.159px;">Código</span><span style="position:absolute;left:382.00px;top:416.93px;font-size:15px;line-height:16.75px;color:#1e1e1e;white-space:pre;letter-spacing:0.146px;">Descrição</span><span style="position:absolute;left:720.60px;top:416.93px;font-size:15px;line-height:16.75px;color:#1e1e1e;white-space:pre;letter-spacing:0.139px;">Grupo</span><span style="position:absolute;left:912.00px;top:416.93px;font-size:15px;line-height:16.75px;color:#1e1e1e;white-space:pre;letter-spacing:-0.391px;">NCM</span><span style="position:absolute;left:989.50px;top:416.93px;font-size:15px;line-height:16.75px;color:#1e1e1e;white-space:pre;letter-spacing:-0.793px;">CFOP</span><span style="position:absolute;left:1075.00px;top:416.93px;font-size:15px;line-height:16.75px;color:#1e1e1e;white-space:pre;">CST</span><span style="position:absolute;left:1164.50px;top:416.93px;font-size:15px;line-height:16.75px;color:#1e1e1e;white-space:pre;letter-spacing:0.499px;">Class. Trib.</span><span style="position:absolute;left:1307.00px;top:416.93px;font-size:15px;line-height:16.75px;color:#1e1e1e;white-space:pre;letter-spacing:-0.948px;">CBS</span><span style="position:absolute;left:1400.00px;top:416.93px;font-size:15px;line-height:16.75px;color:#1e1e1e;white-space:pre;letter-spacing:0.102px;">IBS Est.</span><span style="position:absolute;left:1500.50px;top:416.93px;font-size:15px;line-height:16.75px;color:#1e1e1e;white-space:pre;letter-spacing:0.225px;">IBS Mun.</span><span style="position:absolute;left:323.30px;top:442.67px;font-size:16.5px;line-height:18.43px;color:#000;white-space:pre;font-weight:700;letter-spacing:0.620px;">0001</span><span style="position:absolute;left:383.20px;top:444.48px;font-size:14.5px;line-height:16.20px;color:#141414;white-space:pre;">ÁGUA MINERAL</span><span style="position:absolute;left:722.00px;top:444.48px;font-size:14.5px;line-height:16.20px;color:#141414;white-space:pre;letter-spacing:-0.337px;">BEBIDAS</span><span style="position:absolute;left:893.00px;top:444.48px;font-size:14.5px;line-height:16.20px;color:#141414;white-space:pre;letter-spacing:0.636px;">84433299</span><span style="position:absolute;left:990.40px;top:444.48px;font-size:14.5px;line-height:16.20px;color:#141414;white-space:pre;letter-spacing:0.484px;">5102</span><span style="position:absolute;left:323.30px;top:468.87px;font-size:16.5px;line-height:18.43px;color:#000;white-space:pre;font-weight:700;letter-spacing:0.620px;">0002</span><span style="position:absolute;left:383.20px;top:470.68px;font-size:14.5px;line-height:16.20px;color:#141414;white-space:pre;letter-spacing:-0.293px;">CAFÉ</span><span style="position:absolute;left:722.00px;top:470.68px;font-size:14.5px;line-height:16.20px;color:#141414;white-space:pre;letter-spacing:-0.337px;">BEBIDAS</span><span style="position:absolute;left:893.00px;top:470.68px;font-size:14.5px;line-height:16.20px;color:#141414;white-space:pre;letter-spacing:0.770px;">21011200</span><span style="position:absolute;left:990.40px;top:470.68px;font-size:14.5px;line-height:16.20px;color:#141414;white-space:pre;letter-spacing:0.484px;">5102</span><span style="position:absolute;left:323.30px;top:495.07px;font-size:16.5px;line-height:18.43px;color:#000;white-space:pre;font-weight:700;letter-spacing:0.620px;">0003</span><span style="position:absolute;left:383.20px;top:496.88px;font-size:14.5px;line-height:16.20px;color:#141414;white-space:pre;letter-spacing:-0.333px;">REFRIGERANTE</span><span style="position:absolute;left:722.00px;top:496.88px;font-size:14.5px;line-height:16.20px;color:#141414;white-space:pre;letter-spacing:-0.337px;">BEBIDAS</span><span style="position:absolute;left:893.00px;top:496.88px;font-size:14.5px;line-height:16.20px;color:#141414;white-space:pre;letter-spacing:0.636px;">22021000</span><span style="position:absolute;left:990.40px;top:496.88px;font-size:14.5px;line-height:16.20px;color:#141414;white-space:pre;letter-spacing:0.484px;">5405</span><span style="position:absolute;left:323.30px;top:521.27px;font-size:16.5px;line-height:18.43px;color:#000;white-space:pre;font-weight:700;letter-spacing:0.620px;">0004</span><span style="position:absolute;left:383.20px;top:523.08px;font-size:14.5px;line-height:16.20px;color:#141414;white-space:pre;letter-spacing:0.106px;">SUCO NATURAL</span><span style="position:absolute;left:722.00px;top:523.08px;font-size:14.5px;line-height:16.20px;color:#141414;white-space:pre;letter-spacing:-0.337px;">BEBIDAS</span><span style="position:absolute;left:893.00px;top:523.08px;font-size:14.5px;line-height:16.20px;color:#141414;white-space:pre;letter-spacing:0.636px;">20091200</span><span style="position:absolute;left:990.40px;top:523.08px;font-size:14.5px;line-height:16.20px;color:#141414;white-space:pre;letter-spacing:0.484px;">5102</span><span style="position:absolute;left:323.30px;top:547.47px;font-size:16.5px;line-height:18.43px;color:#000;white-space:pre;font-weight:700;letter-spacing:0.620px;">0005</span><span style="position:absolute;left:383.20px;top:549.28px;font-size:14.5px;line-height:16.20px;color:#141414;white-space:pre;letter-spacing:-0.446px;">CERVEJA</span><span style="position:absolute;left:722.00px;top:549.28px;font-size:14.5px;line-height:16.20px;color:#141414;white-space:pre;letter-spacing:-0.337px;">BEBIDAS</span><span style="position:absolute;left:893.00px;top:549.28px;font-size:14.5px;line-height:16.20px;color:#141414;white-space:pre;letter-spacing:0.636px;">22030000</span><span style="position:absolute;left:990.40px;top:549.28px;font-size:14.5px;line-height:16.20px;color:#141414;white-space:pre;letter-spacing:0.484px;">5405</span><span style="position:absolute;left:323.30px;top:573.67px;font-size:16.5px;line-height:18.43px;color:#000;white-space:pre;font-weight:700;letter-spacing:0.620px;">0006</span><span style="position:absolute;left:383.20px;top:575.48px;font-size:14.5px;line-height:16.20px;color:#141414;white-space:pre;letter-spacing:0.353px;">VINHO TINTO</span><span style="position:absolute;left:722.00px;top:575.48px;font-size:14.5px;line-height:16.20px;color:#141414;white-space:pre;letter-spacing:-0.337px;">BEBIDAS</span><span style="position:absolute;left:893.00px;top:575.48px;font-size:14.5px;line-height:16.20px;color:#141414;white-space:pre;letter-spacing:0.770px;">22042911</span><span style="position:absolute;left:990.40px;top:575.48px;font-size:14.5px;line-height:16.20px;color:#141414;white-space:pre;letter-spacing:0.484px;">5102</span><span style="position:absolute;left:323.30px;top:599.87px;font-size:16.5px;line-height:18.43px;color:#000;white-space:pre;font-weight:700;letter-spacing:0.620px;">0007</span><span style="position:absolute;left:383.20px;top:601.68px;font-size:14.5px;line-height:16.20px;color:#141414;white-space:pre;letter-spacing:-0.079px;">FILÉ MIGNON</span><span style="position:absolute;left:722.00px;top:601.68px;font-size:14.5px;line-height:16.20px;color:#141414;white-space:pre;letter-spacing:-0.017px;">RESTAURANTE</span><span style="position:absolute;left:893.00px;top:601.68px;font-size:14.5px;line-height:16.20px;color:#141414;white-space:pre;letter-spacing:0.636px;">21069090</span><span style="position:absolute;left:990.40px;top:601.68px;font-size:14.5px;line-height:16.20px;color:#141414;white-space:pre;letter-spacing:0.484px;">5102</span><span style="position:absolute;left:323.30px;top:626.07px;font-size:16.5px;line-height:18.43px;color:#000;white-space:pre;font-weight:700;letter-spacing:0.620px;">0008</span><span style="position:absolute;left:383.20px;top:627.88px;font-size:14.5px;line-height:16.20px;color:#141414;white-space:pre;letter-spacing:-0.176px;">SALMÃO GRELHADO</span><span style="position:absolute;left:722.00px;top:627.88px;font-size:14.5px;line-height:16.20px;color:#141414;white-space:pre;letter-spacing:-0.017px;">RESTAURANTE</span><span style="position:absolute;left:893.00px;top:627.88px;font-size:14.5px;line-height:16.20px;color:#141414;white-space:pre;letter-spacing:0.636px;">21069090</span><span style="position:absolute;left:990.40px;top:627.88px;font-size:14.5px;line-height:16.20px;color:#141414;white-space:pre;letter-spacing:0.484px;">5405</span><span style="position:absolute;left:323.30px;top:652.27px;font-size:16.5px;line-height:18.43px;color:#000;white-space:pre;font-weight:700;letter-spacing:0.620px;">0009</span><span style="position:absolute;left:383.20px;top:654.08px;font-size:14.5px;line-height:16.20px;color:#141414;white-space:pre;letter-spacing:-0.083px;">REFEIÇÃO SELF-SERVICE</span><span style="position:absolute;left:722.00px;top:654.08px;font-size:14.5px;line-height:16.20px;color:#141414;white-space:pre;letter-spacing:-0.017px;">RESTAURANTE</span><span style="position:absolute;left:893.00px;top:654.08px;font-size:14.5px;line-height:16.20px;color:#141414;white-space:pre;letter-spacing:0.636px;">21069090</span><span style="position:absolute;left:990.40px;top:654.08px;font-size:14.5px;line-height:16.20px;color:#141414;white-space:pre;letter-spacing:0.484px;">5102</span><span style="position:absolute;left:323.30px;top:678.47px;font-size:16.5px;line-height:18.43px;color:#000;white-space:pre;font-weight:700;letter-spacing:0.620px;">0010</span><span style="position:absolute;left:383.20px;top:680.28px;font-size:14.5px;line-height:16.20px;color:#141414;white-space:pre;letter-spacing:0.134px;">PORÇÃO FRITAS</span><span style="position:absolute;left:722.00px;top:680.28px;font-size:14.5px;line-height:16.20px;color:#141414;white-space:pre;letter-spacing:-0.017px;">RESTAURANTE</span><span style="position:absolute;left:893.00px;top:680.28px;font-size:14.5px;line-height:16.20px;color:#141414;white-space:pre;letter-spacing:0.636px;">21069090</span><span style="position:absolute;left:990.40px;top:680.28px;font-size:14.5px;line-height:16.20px;color:#141414;white-space:pre;letter-spacing:0.484px;">5102</span><span style="position:absolute;left:323.30px;top:704.67px;font-size:16.5px;line-height:18.43px;color:#000;white-space:pre;font-weight:700;letter-spacing:0.851px;">0011</span><span style="position:absolute;left:383.20px;top:706.48px;font-size:14.5px;line-height:16.20px;color:#141414;white-space:pre;letter-spacing:-0.138px;">PICANHA</span><span style="position:absolute;left:722.00px;top:706.48px;font-size:14.5px;line-height:16.20px;color:#141414;white-space:pre;letter-spacing:-0.017px;">RESTAURANTE</span><span style="position:absolute;left:893.00px;top:706.48px;font-size:14.5px;line-height:16.20px;color:#141414;white-space:pre;letter-spacing:0.636px;">21069090</span><span style="position:absolute;left:990.40px;top:706.48px;font-size:14.5px;line-height:16.20px;color:#141414;white-space:pre;letter-spacing:0.484px;">5102</span><span style="position:absolute;left:323.30px;top:730.87px;font-size:16.5px;line-height:18.43px;color:#000;white-space:pre;font-weight:700;letter-spacing:0.620px;">0012</span><span style="position:absolute;left:383.20px;top:732.68px;font-size:14.5px;line-height:16.20px;color:#141414;white-space:pre;letter-spacing:0.011px;">SALADA</span><span style="position:absolute;left:722.00px;top:732.68px;font-size:14.5px;line-height:16.20px;color:#141414;white-space:pre;letter-spacing:-0.017px;">RESTAURANTE</span><span style="position:absolute;left:893.00px;top:732.68px;font-size:14.5px;line-height:16.20px;color:#141414;white-space:pre;letter-spacing:0.636px;">21069090</span><span style="position:absolute;left:990.40px;top:732.68px;font-size:14.5px;line-height:16.20px;color:#141414;white-space:pre;letter-spacing:0.484px;">5102</span><span style="position:absolute;left:323.30px;top:757.07px;font-size:16.5px;line-height:18.43px;color:#000;white-space:pre;font-weight:700;letter-spacing:0.620px;">0013</span><span style="position:absolute;left:383.20px;top:758.88px;font-size:14.5px;line-height:16.20px;color:#141414;white-space:pre;letter-spacing:-0.064px;">CHOCOLATE</span><span style="position:absolute;left:722.00px;top:758.88px;font-size:14.5px;line-height:16.20px;color:#141414;white-space:pre;letter-spacing:-0.350px;">BOMBONIERE</span><span style="position:absolute;left:893.00px;top:758.88px;font-size:14.5px;line-height:16.20px;color:#141414;white-space:pre;letter-spacing:0.770px;">18063110</span><span style="position:absolute;left:990.40px;top:758.88px;font-size:14.5px;line-height:16.20px;color:#141414;white-space:pre;letter-spacing:0.484px;">5102</span><span style="position:absolute;left:323.30px;top:783.27px;font-size:16.5px;line-height:18.43px;color:#000;white-space:pre;font-weight:700;letter-spacing:0.620px;">0014</span><span style="position:absolute;left:383.20px;top:785.08px;font-size:14.5px;line-height:16.20px;color:#141414;white-space:pre;letter-spacing:-0.194px;">BOMBOM</span><span style="position:absolute;left:722.00px;top:785.08px;font-size:14.5px;line-height:16.20px;color:#141414;white-space:pre;letter-spacing:-0.350px;">BOMBONIERE</span><span style="position:absolute;left:893.00px;top:785.08px;font-size:14.5px;line-height:16.20px;color:#141414;white-space:pre;letter-spacing:0.770px;">18063110</span><span style="position:absolute;left:990.40px;top:785.08px;font-size:14.5px;line-height:16.20px;color:#141414;white-space:pre;letter-spacing:0.484px;">5102</span><span style="position:absolute;left:323.30px;top:809.47px;font-size:16.5px;line-height:18.43px;color:#000;white-space:pre;font-weight:700;letter-spacing:0.620px;">0015</span><span style="position:absolute;left:383.20px;top:811.28px;font-size:14.5px;line-height:16.20px;color:#141414;white-space:pre;letter-spacing:-0.248px;">BALA</span><span style="position:absolute;left:722.00px;top:811.28px;font-size:14.5px;line-height:16.20px;color:#141414;white-space:pre;letter-spacing:-0.350px;">BOMBONIERE</span><span style="position:absolute;left:893.00px;top:811.28px;font-size:14.5px;line-height:16.20px;color:#141414;white-space:pre;letter-spacing:0.636px;">17049020</span><span style="position:absolute;left:990.40px;top:811.28px;font-size:14.5px;line-height:16.20px;color:#141414;white-space:pre;letter-spacing:0.484px;">5102</span><span style="position:absolute;left:323.30px;top:835.67px;font-size:16.5px;line-height:18.43px;color:#000;white-space:pre;font-weight:700;letter-spacing:0.620px;">0016</span><span style="position:absolute;left:383.20px;top:837.48px;font-size:14.5px;line-height:16.20px;color:#141414;white-space:pre;letter-spacing:-0.252px;">CHICLETE</span><span style="position:absolute;left:722.00px;top:837.48px;font-size:14.5px;line-height:16.20px;color:#141414;white-space:pre;letter-spacing:-0.350px;">BOMBONIERE</span><span style="position:absolute;left:893.00px;top:837.48px;font-size:14.5px;line-height:16.20px;color:#141414;white-space:pre;letter-spacing:0.636px;">17041000</span><span style="position:absolute;left:990.40px;top:837.48px;font-size:14.5px;line-height:16.20px;color:#141414;white-space:pre;letter-spacing:0.484px;">5102</span><span style="position:absolute;left:1362.00px;top:876.92px;font-size:15px;line-height:16.75px;color:#4d72a0;white-space:pre;letter-spacing:0.515px;">Total em Exibição:</span><span style="position:absolute;left:1543.00px;top:876.92px;font-size:15px;line-height:16.75px;color:#3d6090;white-space:pre;font-weight:700;letter-spacing:1.323px;">157</span><span style="position:absolute;left:1378.00px;top:923.42px;font-size:15px;line-height:16.75px;color:#1e1e1e;white-space:pre;letter-spacing:0.193px;">Gravar</span><span style="position:absolute;left:1526.50px;top:923.42px;font-size:15px;line-height:16.75px;color:#1e1e1e;white-space:pre;letter-spacing:0.309px;">Cancelar</span><span style="position:absolute;left:4.20px;top:1000.82px;font-size:16px;line-height:17.87px;color:#3f6694;white-space:pre;letter-spacing:0.057px;">Versão: 2026.01.08</span><span style="position:absolute;left:152.50px;top:1000.82px;font-size:16px;line-height:17.87px;color:#3f6694;white-space:pre;letter-spacing:-0.245px;">localhost/3050:C:\Datacaixa2026\BD\BANCO.FDB</span><span style="position:absolute;left:651.30px;top:1000.82px;font-size:16px;line-height:17.87px;color:#3f6694;white-space:pre;letter-spacing:0.038px;">Usuário: carolina</span><span style="position:absolute;left:875.80px;top:1001.78px;font-size:13.5px;line-height:15.08px;color:#e8141c;white-space:pre;letter-spacing:0.061px;">Validade do Certificado: 10/01/2026</span><span style="position:absolute;left:1221.30px;top:1000.82px;font-size:16px;line-height:17.87px;color:#3f6694;white-space:pre;letter-spacing:-0.114px;">Suporte: DATACAIXA TECNOLOGIA Celular: (11)98620-5451</span><span style="position:absolute;left:1780.30px;top:1000.82px;font-size:16px;line-height:17.87px;color:#3f6694;white-space:pre;letter-spacing:-0.483px;">Backup Nuvem</span>
</body></html>
